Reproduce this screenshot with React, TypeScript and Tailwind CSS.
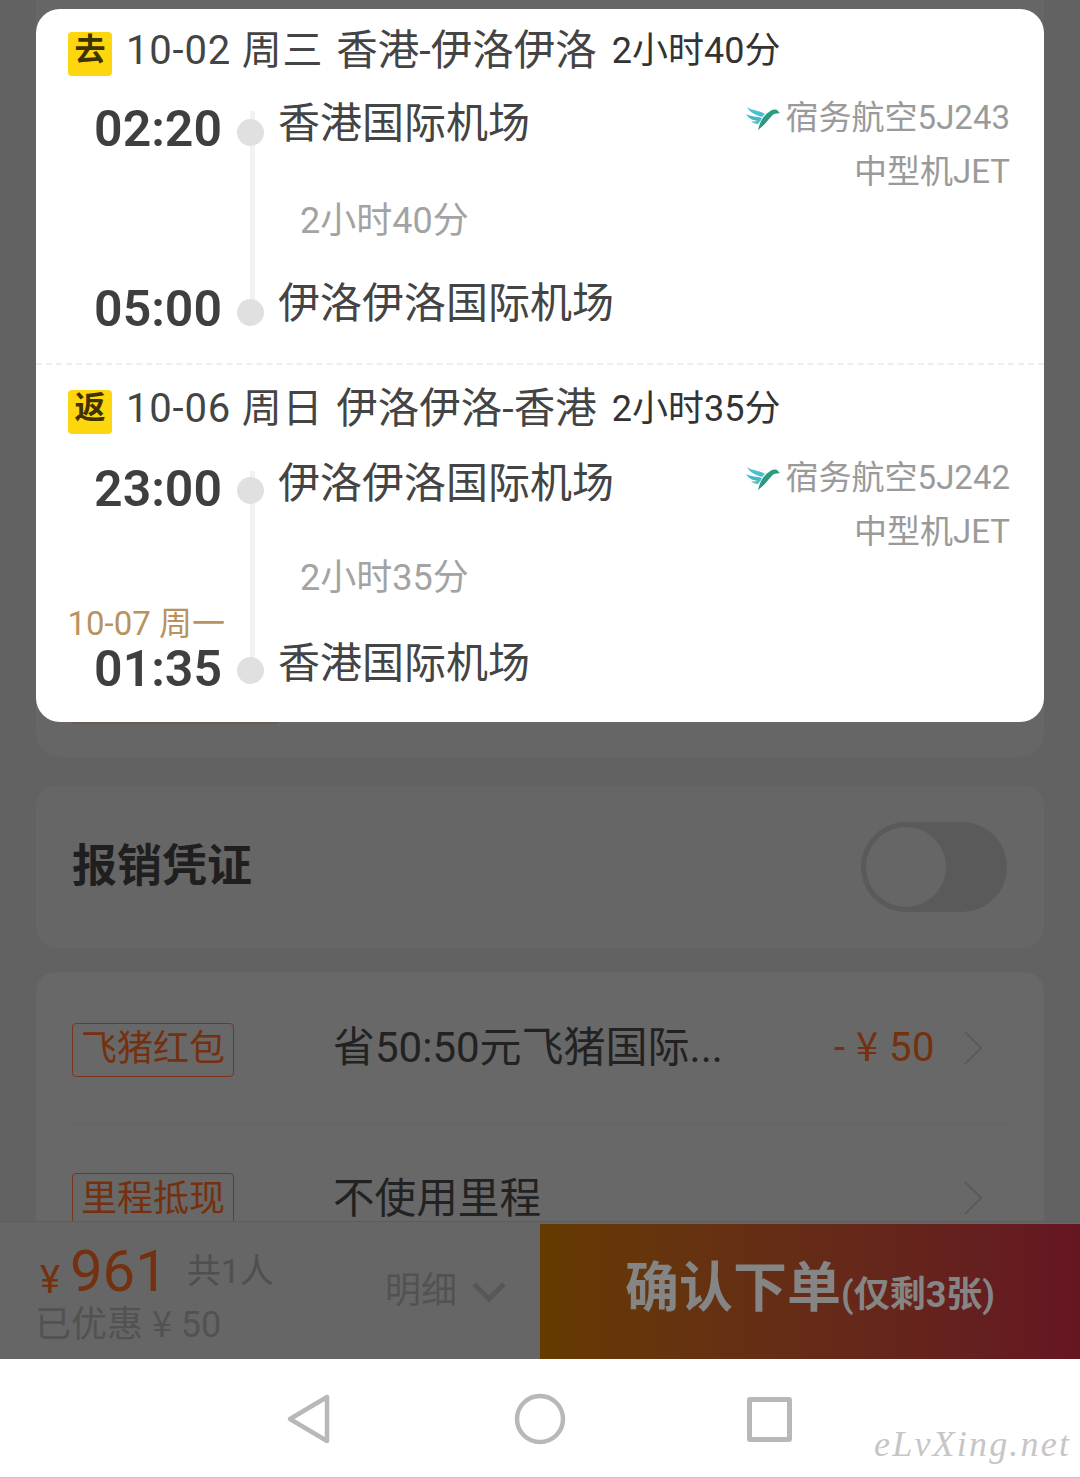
import { clsx } from 'clsx';

const FONT = "font-['Roboto','Noto_Sans_CJK_SC',sans-serif]";

function BirdLogo() {
  return (
    <svg width="36" height="28" viewBox="0 0 36 28" className="shrink-0">
      <path d="M2 3c5 4 12 3 18 7l-3 3C11 11 5 9 2 3z" fill="#4dbfd0" />
      <path d="M1 10c5 3 11 2 16 4l-2 3C9 17 4 15 1 10z" fill="#45b8c8" />
      <path d="M6 17c3 1 7 0 10-1l-3 4c-3 0-5-1-7-3z" fill="#4fc0b8" />
      <path d="M13 26c2-8 5-14 11-18 2-2 5-3 8-2l3 3-6 1c-2 1-3 3-5 5-3 4-7 8-11 11z" fill="#2e9a80" />
    </svg>
  );
}

function Chevron({ className }: { className?: string }) {
  return (
    <svg width="20" height="34" viewBox="0 0 20 34" fill="none" className={className}>
      <path d="M2 1l16 16L2 33" stroke="#5a5a5a" strokeWidth="2" />
    </svg>
  );
}

interface SegmentProps {
  tag: string;
  date: string;
  route: string;
  duration: string;
  depTime: string;
  arrTime: string;
  arrDate?: string;
  from: string;
  to: string;
  flight: string;
  isReturn?: boolean;
}

function Segment({ tag, date, route, duration, depTime, arrTime, arrDate, from, to, flight, isReturn }: SegmentProps) {
  return (
    <div>
      <div className="flex items-start h-[44px] pl-[32px]">
        <span className="w-[44px] h-[44px] mt-[3px] rounded-[4px] bg-[#fdd60e] text-[#3d3200] text-[31px] leading-[36px] font-bold text-center shrink-0">
          {tag}
        </span>
        <span className="ml-[14px] text-[40px] leading-[44px] text-[#444444] tracking-[0.8px] whitespace-pre">
          {date}
        </span>
        <span className="ml-[13px] text-[41.5px] leading-[44px] text-[#444444] whitespace-pre">{route}</span>
        <span className="ml-[15px] text-[36px] leading-[44px] text-[#333333] whitespace-pre">{duration}</span>
      </div>
      <div className={clsx('flex h-[217px]', isReturn ? 'mt-[40px]' : 'mt-[38px]')}>
        <div className="w-[186px] mt-[-10px] mb-[-9px] flex flex-col justify-between items-end shrink-0">
          <span className="text-[50px] leading-[56px] font-semibold text-[#3f3f3f]">{depTime}</span>
          <div className="flex flex-col items-end">
            {arrDate && (
              <span className="text-[33px] leading-[34px] text-[#b8925f] mr-[-3px]">{arrDate}</span>
            )}
            <span className="text-[50px] leading-[56px] font-semibold text-[#3f3f3f]">{arrTime}</span>
          </div>
        </div>
        <div
          className={clsx(
            'relative w-[27px] ml-[15px] shrink-0 flex flex-col justify-between items-center',
            isReturn ? 'pt-[6px] pb-[4px]' : 'pt-[8px] pb-[2px]',
          )}
        >
          <div className="absolute left-[13px] top-0 bottom-[20px] w-[5px] bg-[#f2f2f2]" />
          <div className="relative w-[27px] h-[27px] rounded-full bg-[#e0e0e0]" />
          <div className="relative w-[27px] h-[27px] rounded-full bg-[#e0e0e0]" />
        </div>
        <div className="flex-1 ml-[14px] flex justify-between pr-[34px] mt-[-10px]">
          <div className="flex flex-col">
            <span className="text-[42px] leading-[46px] text-[#444444] whitespace-pre">{from}</span>
            <span
              className={clsx(
                'ml-[22px] text-[36px] leading-[44px] text-[#a3a3a3]',
                isReturn ? 'mt-[49px] mb-[41px]' : 'mt-[52px] mb-[38px]',
              )}
            >
              {duration}
            </span>
            <span className="text-[42px] leading-[46px] text-[#444444] whitespace-pre">{to}</span>
          </div>
          <div className="flex flex-col items-end text-[33px] leading-[54px] text-[#9a9a9a] mt-[-10px]">
            <div className="flex items-center gap-[5px]">
              <BirdLogo />
              <span>宿务航空{flight}</span>
            </div>
            <span>中型机JET</span>
          </div>
        </div>
      </div>
    </div>
  );
}

export default function App() {
  return (
    <div className={`${FONT} relative w-[1080px] h-[1478px] overflow-hidden bg-[#626262] flex flex-col`}>
      {/* Page behind the overlay */}
      <div className="h-[1221px] overflow-hidden px-[36px] flex flex-col shrink-0">
        <div className="h-[757px] rounded-b-[24px] bg-[#666666] shrink-0 pt-[722px] pl-[36px]">
          <div className="w-[206px] h-[2px] bg-[#6f5a50]" />
        </div>
        <div className="mt-[29px] h-[162px] rounded-[20px] bg-[#666666] flex items-center justify-between pl-[36px] pr-[37px] shrink-0">
          <span className="text-[45px] font-bold text-[#1f1f1f]">报销凭证</span>
          <div className="w-[146px] h-[90px] rounded-full bg-[#5a5a5a] p-[5px]">
            <div className="w-[80px] h-[80px] rounded-full bg-[#666666]" />
          </div>
        </div>
        <div className="mt-[24px] flex-1 rounded-t-[20px] bg-[#686868] pl-[36px] pr-[36px] pt-[51px]">
          <div className="flex items-center h-[54px]">
            <span className="w-[162px] h-[54px] rounded-[4px] border border-[#7c3519] text-[36px] leading-[50px] text-center text-[#74300f] shrink-0">
              飞猪红包
            </span>
            <span className="ml-[99px] mt-[-4px] text-[42px] leading-[46px] text-[#222222] whitespace-pre">
              省50:50元飞猪国际...
            </span>
            <span className="ml-auto mt-[-8px] text-[40px] leading-[46px] text-[#74300f] tracking-[0.5px] whitespace-pre">
              - <span className="font-['Noto_Sans_CJK_SC',sans-serif]">¥</span> 50
            </span>
            <Chevron className="ml-[28px] mr-[25px] mt-[-4px]" />
          </div>
          <div className="mt-[46px] h-px bg-[#636363]" />
          <div className="flex items-center h-[54px] mt-[49px]">
            <span className="w-[162px] h-[54px] rounded-[4px] border border-[#7c3519] text-[36px] leading-[50px] text-center text-[#74300f] shrink-0">
              里程抵现
            </span>
            <span className="ml-[99px] mt-[-2px] text-[41.6px] leading-[40px] text-[#222222] whitespace-pre">
              不使用里程
            </span>
            <Chevron className="ml-auto mr-[25px] mt-[-4px]" />
          </div>
        </div>
      </div>

      {/* Bottom bar */}
      <div className="h-[138px] shrink-0 bg-[#666666] border-t border-[#5c5c5c] flex">
        <div className="w-[540px] shrink-0 flex items-center">
          <div className="pl-[35px] w-[385px] mt-[6px]">
            <div className="flex items-end h-[60px] pl-[5px] mt-[1px]">
              <span className="text-[38px] leading-[44px] text-[#74300f]">¥</span>
              <span className="ml-[10px] text-[58px] leading-[62px] text-[#74300f]">961</span>
              <span className="ml-[19px] text-[34px] leading-[62px] text-[#4f4f4f]">共1人</span>
            </div>
            <div className="mt-[-2px] text-[36px] leading-[42px] text-[#525252] whitespace-pre">
              已优惠 <span className="font-['Noto_Sans_CJK_SC',sans-serif]">¥</span> 50
            </div>
          </div>
          <span className="text-[36px] text-[#525252]">明细</span>
          <svg width="34" height="22" viewBox="0 0 34 22" fill="none" className="ml-[15px] mt-[3px]">
            <path d="M2 3l15 15L32 3" stroke="#575757" strokeWidth="5" />
          </svg>
        </div>
        <div className="flex-1 mt-[2px] bg-gradient-to-r from-[#653b00] to-[#651622] flex items-center justify-center font-bold text-[#858585] whitespace-pre">
          <span className="text-[54px] leading-[60px] mt-[-6px]">确认下单</span>
          <span className="text-[36px] leading-[60px] mt-[6px]">(仅剩3张)</span>
        </div>
      </div>

      {/* Navigation bar */}
      <div className="relative flex-1 bg-white border-b border-[#c4c4c4] flex items-center pl-[285px] pt-[2px]">
        <svg width="46" height="52" viewBox="0 0 46 52" fill="none">
          <path d="M42 4v44L5 26z" stroke="#b8b8b8" strokeWidth="4.5" strokeLinejoin="round" />
        </svg>
        <svg width="52" height="52" viewBox="0 0 52 52" fill="none" className="ml-[183px]">
          <circle cx="26" cy="26" r="23" stroke="#b8b8b8" strokeWidth="4.5" />
        </svg>
        <div className="ml-[181px] w-[45px] h-[45px] rounded-[3px] border-[5px] border-[#b8b8b8]" />
        <span className="absolute left-[874px] top-[63px] font-['Liberation_Serif',serif] italic text-[36px] leading-[44px] text-[#c6c6c6] tracking-[2.2px]">
          eLvXing.net
        </span>
      </div>

      {/* Flight detail overlay */}
      <div className="absolute left-[36px] top-[9px] w-[1008px] h-[713px] rounded-[24px] bg-white pt-[20px]">
        <Segment
          tag="去"
          date="10-02 周三"
          route="香港-伊洛伊洛"
          duration="2小时40分"
          depTime="02:20"
          arrTime="05:00"
          from="香港国际机场"
          to="伊洛伊洛国际机场"
          flight="5J243"
        />
        <div className="mt-[35px] border-t-2 border-dashed border-[#eeeeee]" />
        <div className="mt-[22px]">
          <Segment
            isReturn
            tag="返"
            date="10-06 周日"
            route="伊洛伊洛-香港"
            duration="2小时35分"
            depTime="23:00"
            arrTime="01:35"
            arrDate="10-07 周一"
            from="伊洛伊洛国际机场"
            to="香港国际机场"
            flight="5J242"
          />
        </div>
      </div>
    </div>
  );
}
